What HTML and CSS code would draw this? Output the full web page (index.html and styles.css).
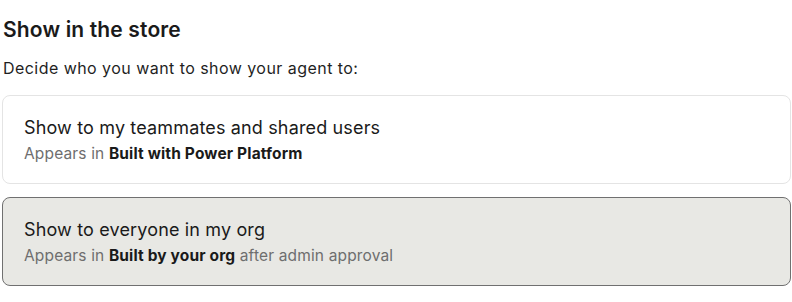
FILE: index.html
```html
<!DOCTYPE html>
<html>
<head>
<meta charset="utf-8">
<link rel="stylesheet" href="styles.css">
</head>
<body>
<section class="panel">
  <h2 class="title">Show in the store</h2>
  <p class="lead">Decide who you want to show your agent to:</p>
  <div class="options">
    <div class="option">
      <div class="option-title">Show to my teammates and shared users</div>
      <div class="option-sub">Appears in <b>Built with Power Platform</b></div>
    </div>
    <div class="option selected">
      <div class="option-title">Show to everyone in my org</div>
      <div class="option-sub">Appears in <b>Built by your org</b> after admin approval</div>
    </div>
  </div>
</section>
</body>
</html>
```
FILE: styles.css
```css
html, body { margin: 0; padding: 0; background: #fff; }
body { font-family: Inter, "Open Sans", sans-serif; color: #1f1f1f; }
.panel { padding: 0 1px 0 2px; }
.title { margin: 0; padding-top: 17px; padding-left: 1px; font-size: 21px; font-weight: 600; line-height: 26px; color: #1a1a1a; letter-spacing: 0.15px; }
.lead { margin: 14px 0 0 1px; font-size: 16px; line-height: 22px; color: #1f1f1f; letter-spacing: 0.45px; }
.options { display: flex; flex-direction: column; gap: 13px; margin-top: 16px; }
.option { border: 1px solid #e4e4e4; border-radius: 8px; padding: 20px 21px 18px; background: #fff; }
.option.selected { background: #e8e8e4; border-color: #707070; }
.option-title { font-size: 18px; line-height: 24px; color: #1a1a1a; letter-spacing: 0.15px; }
.option-sub { font-size: 15.5px; line-height: 22px; color: #6e6e6e; margin-top: 3px; letter-spacing: 0.15px; }
.option-sub b { color: #1a1a1a; font-weight: 700; }
```
